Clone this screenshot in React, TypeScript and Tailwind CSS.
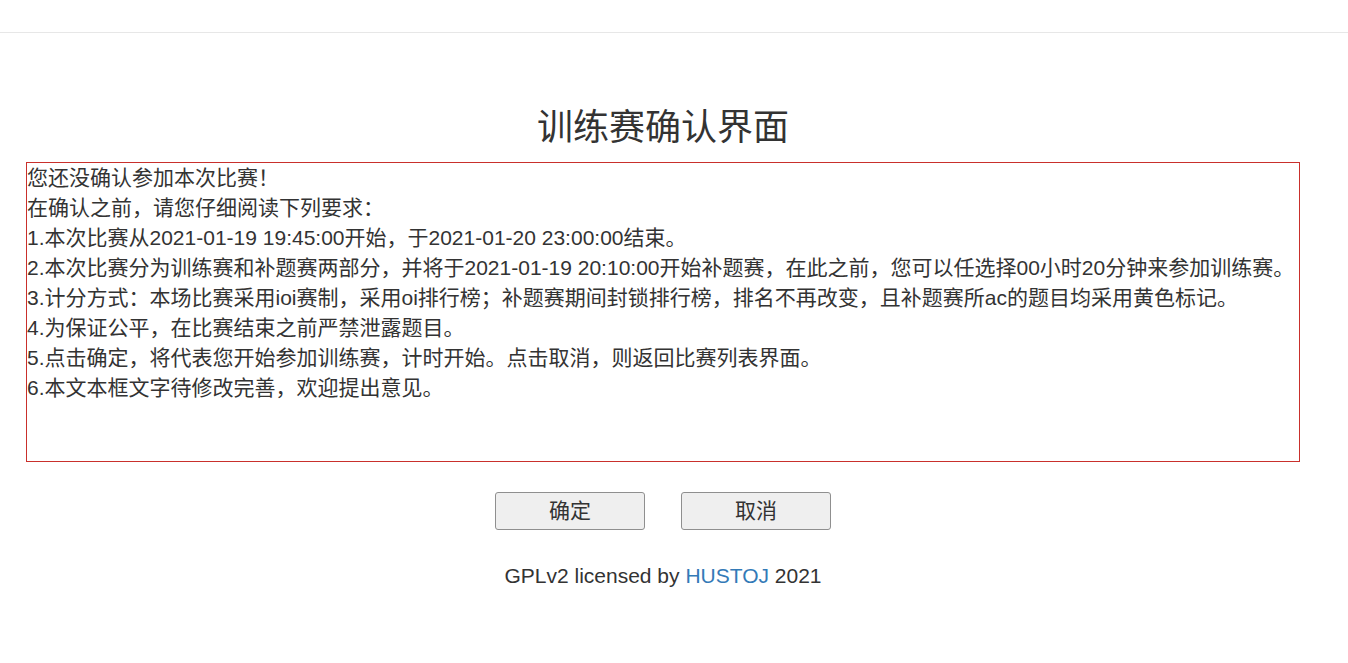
import React from 'react';

const rules = [
  '您还没确认参加本次比赛！',
  '在确认之前，请您仔细阅读下列要求：',
  '1.本次比赛从2021-01-19 19:45:00开始，于2021-01-20 23:00:00结束。',
  '2.本次比赛分为训练赛和补题赛两部分，并将于2021-01-19 20:10:00开始补题赛，在此之前，您可以任选择00小时20分钟来参加训练赛。',
  '3.计分方式：本场比赛采用ioi赛制，采用oi排行榜；补题赛期间封锁排行榜，排名不再改变，且补题赛所ac的题目均采用黄色标记。',
  '4.为保证公平，在比赛结束之前严禁泄露题目。',
  '5.点击确定，将代表您开始参加训练赛，计时开始。点击取消，则返回比赛列表界面。',
  '6.本文本框文字待修改完善，欢迎提出意见。',
];

const font = "font-['Liberation_Sans','Noto_Sans_CJK_SC',sans-serif]";

export default function App() {
  return (
    <div className={`min-h-screen bg-white text-[#333] ${font}`}>
      {/* 顶部导航 */}
      <div className="h-[33px] border-b border-[#e7e7e7]" />

      <div className="pr-[22px]">
        <h1 className="mt-[75px] text-center text-[36px] leading-[40px] font-normal">训练赛确认界面</h1>

        <div className="mx-[26px] mt-[14px] h-[300px] border border-[#c9302c] pl-0 pr-[1px] text-[21px] leading-[30px]">
          {rules.map((line) => (
            <div key={line} className="whitespace-nowrap">
              {line}
            </div>
          ))}
        </div>

        <div className="mt-[30px] flex justify-center gap-[36px]">
          <button className="h-[38px] w-[150px] rounded-[3px] border border-[#8f8f8f] bg-[#efefef] text-[21px] text-[#333]">
            确定
          </button>
          <button className="h-[38px] w-[150px] rounded-[3px] border border-[#8f8f8f] bg-[#efefef] text-[21px] text-[#333]">
            取消
          </button>
        </div>

        <div className="mt-[31px] text-center text-[21px] leading-[30px]">
          GPLv2 licensed by <span className="text-[#337ab7]">HUSTOJ</span> 2021
        </div>
      </div>
    </div>
  );
}
